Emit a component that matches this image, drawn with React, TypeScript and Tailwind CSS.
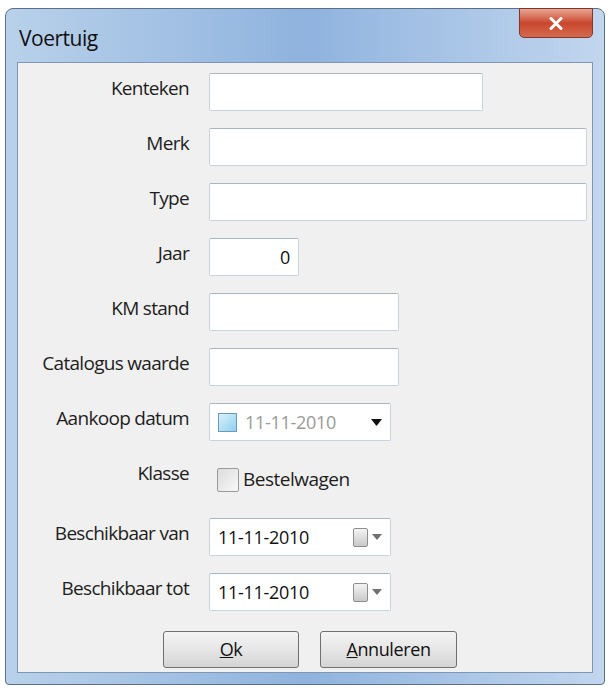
import React, { ReactNode } from "react";

const font = { fontFamily: '"Open Sans", "Noto Sans", sans-serif' };

function Row({ label, children }: { label: string; children: ReactNode }) {
  return (
    <div className="flex h-[38px] items-center">
      <div className="w-[175px] shrink-0 pr-1 text-right text-[19px] tracking-[-0.7px] text-[#1e1e1e] -mt-2 whitespace-nowrap">{label}</div>
      <div className="ml-[16px] flex h-full items-center">{children}</div>
    </div>
  );
}

function Field({ w, children, right }: { w: string; children?: ReactNode; right?: boolean }) {
  return (
    <div
      className={`flex h-[38px] ${w} items-center rounded-[2px] border border-[#c9d3dd] border-t-[#abb6c2] bg-white px-2 text-[18px] tracking-[-0.3px] text-[#111] ${right ? "justify-end" : ""}`}
    >
      {children}
    </div>
  );
}

function Cal() {
  return (
    <div className="flex items-center gap-1">
      <div className="h-[19px] w-[15px] rounded-[2px] border border-[#8e8e8e] bg-gradient-to-b from-[#f4f4f4] to-[#c9c9c9]" />
      <svg width="10" height="6" viewBox="0 0 10 6"><path d="M0 0h10L5 6z" fill="#707070" /></svg>
    </div>
  );
}

export default function App() {
  return (
    <div className="h-[690px] w-[612px] bg-white pl-[5px] pt-[8px]" style={font}>
      <div className="flex h-[677px] w-[600px] flex-col rounded-t-[8px] rounded-b-[4px] border border-[#5b6f86] bg-gradient-to-r from-[#b9d1ea] via-[#8fb3de] to-[#c2d6ee] px-[11px] pb-[11px]">
        <div className="flex h-[53px] items-start justify-between">
          <div className="pl-[2px] pt-[14px] text-[21px] tracking-[-0.5px] text-[#101010]">Voertuig</div>
          <div className="mt-[-1px] flex h-[30px] w-[74px] items-center justify-center rounded-b-[5px] border border-[#7d3a2c] bg-gradient-to-b from-[#e8a493] via-[#c9462c] to-[#d46a4e]">
            <svg width="14" height="13" viewBox="0 0 14 13"><path d="M2 1.5l10 10M12 1.5l-10 10" stroke="#fff" strokeWidth="3" strokeLinecap="round" /></svg>
          </div>
        </div>
        <div className="flex flex-1 flex-col gap-[17px] border border-[#7f97b4] bg-[#f0f0f0] pt-[10px]">
          <Row label="Kenteken"><Field w="w-[274px]" /></Row>
          <Row label="Merk"><Field w="w-[378px]" /></Row>
          <Row label="Type"><Field w="w-[378px]" /></Row>
          <Row label="Jaar"><Field w="w-[90px]" right>0</Field></Row>
          <Row label="KM stand"><Field w="w-[190px]" /></Row>
          <Row label="Catalogus waarde"><Field w="w-[190px]" /></Row>
          <Row label="Aankoop datum">
            <Field w="w-[182px]">
              <div className="mr-2 h-[19px] w-[19px] border border-[#6d9ab8] bg-gradient-to-br from-[#d8f1fb] to-[#8fd0ee]" />
              <span className="text-[#9a9a9a]">11-11-2010</span>
              <svg className="ml-auto" width="11" height="7" viewBox="0 0 11 7"><path d="M0 0h11L5.5 7z" fill="#111" /></svg>
            </Field>
          </Row>
          <div className="flex h-[43px] items-center">
            <div className="w-[175px] shrink-0 pr-1 text-right text-[19px] tracking-[-0.7px] text-[#1e1e1e] -mt-3">Klasse</div>
            <div className="ml-[24px] flex items-center gap-1">
              <div className="h-[24px] w-[22px] rounded-[2px] border border-[#9a9a9a] bg-gradient-to-br from-[#dcdcdc] to-[#f8f8f8]" />
              <span className="text-[19px] tracking-[-0.5px] text-[#1e1e1e]">Bestelwagen</span>
            </div>
          </div>
          <Row label="Beschikbaar van">
            <Field w="w-[182px]"><span className="pr-2">11-11-2010</span><div className="ml-auto"><Cal /></div></Field>
          </Row>
          <Row label="Beschikbaar tot">
            <Field w="w-[182px]"><span className="pr-2">11-11-2010</span><div className="ml-auto"><Cal /></div></Field>
          </Row>
          <div className="mt-[3px] flex gap-[21px] pl-[145px]">
            <button className="h-[37px] w-[136px] rounded-[3px] border border-[#707070] bg-gradient-to-b from-[#f4f4f4] via-[#e6e6e6] to-[#d4d4d4] text-[18px] tracking-[-0.4px] text-[#111]"><u>O</u>k</button>
            <button className="h-[37px] w-[137px] rounded-[3px] border border-[#707070] bg-gradient-to-b from-[#f4f4f4] via-[#e6e6e6] to-[#d4d4d4] text-[18px] tracking-[-0.4px] text-[#111]"><u>A</u>nnuleren</button>
          </div>
        </div>
      </div>
    </div>
  );
}
